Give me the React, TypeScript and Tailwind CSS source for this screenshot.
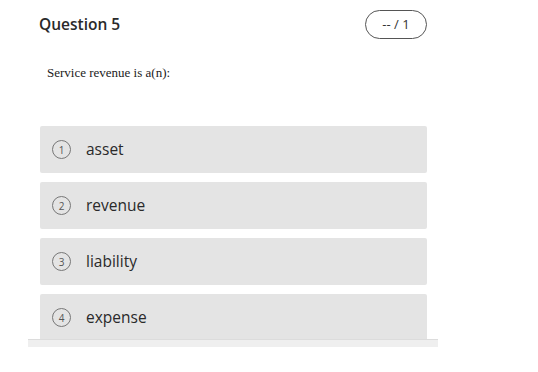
import React from "react";

const options = ["asset", "revenue", "liability", "expense"];

export default function App() {
  return (
    <div className="w-[538px] h-[372px] bg-white overflow-hidden" style={{ fontFamily: '"Open Sans", sans-serif' }}>
      <div className="pl-[40px] w-[428px] pt-[10px]">
        <div className="flex items-center justify-between h-[29px]">
          <div className="text-[15.5px] font-semibold text-[#2a2a2a] leading-none mt-[1px] -ml-[1px]">Question 5</div>
          <div className="w-[62px] h-[29px] rounded-full border border-[#555] flex items-center justify-center text-[13px] text-[#333] mr-[1px]">
            -- / 1
          </div>
        </div>
        <div
          className="mt-[26px] ml-[7px] text-[13px] text-[#222] leading-[15px]"
          style={{ fontFamily: '"Liberation Serif", serif' }}
        >
          Service revenue is a(n):
        </div>
        <div className="mt-[46px] flex flex-col gap-[9px]">
          {options.map((o, i) => (
            <div key={o} className="h-[47px] w-[387px] bg-[#e4e4e4] rounded-[2px] flex items-center pl-[12px]">
              <div className="w-[19px] h-[19px] rounded-full border border-[#777] flex items-center justify-center text-[10px] text-[#555] leading-none">
                {i + 1}
              </div>
              <div className="ml-[15px] text-[15.5px] text-[#2a2a2a] leading-none">{o}</div>
            </div>
          ))}
        </div>
      </div>
      <div className="relative -mt-[2px] ml-[28px] w-[410px] h-[8px] bg-[#efefef] border-t border-[#dcdcdc]" />
    </div>
  );
}
